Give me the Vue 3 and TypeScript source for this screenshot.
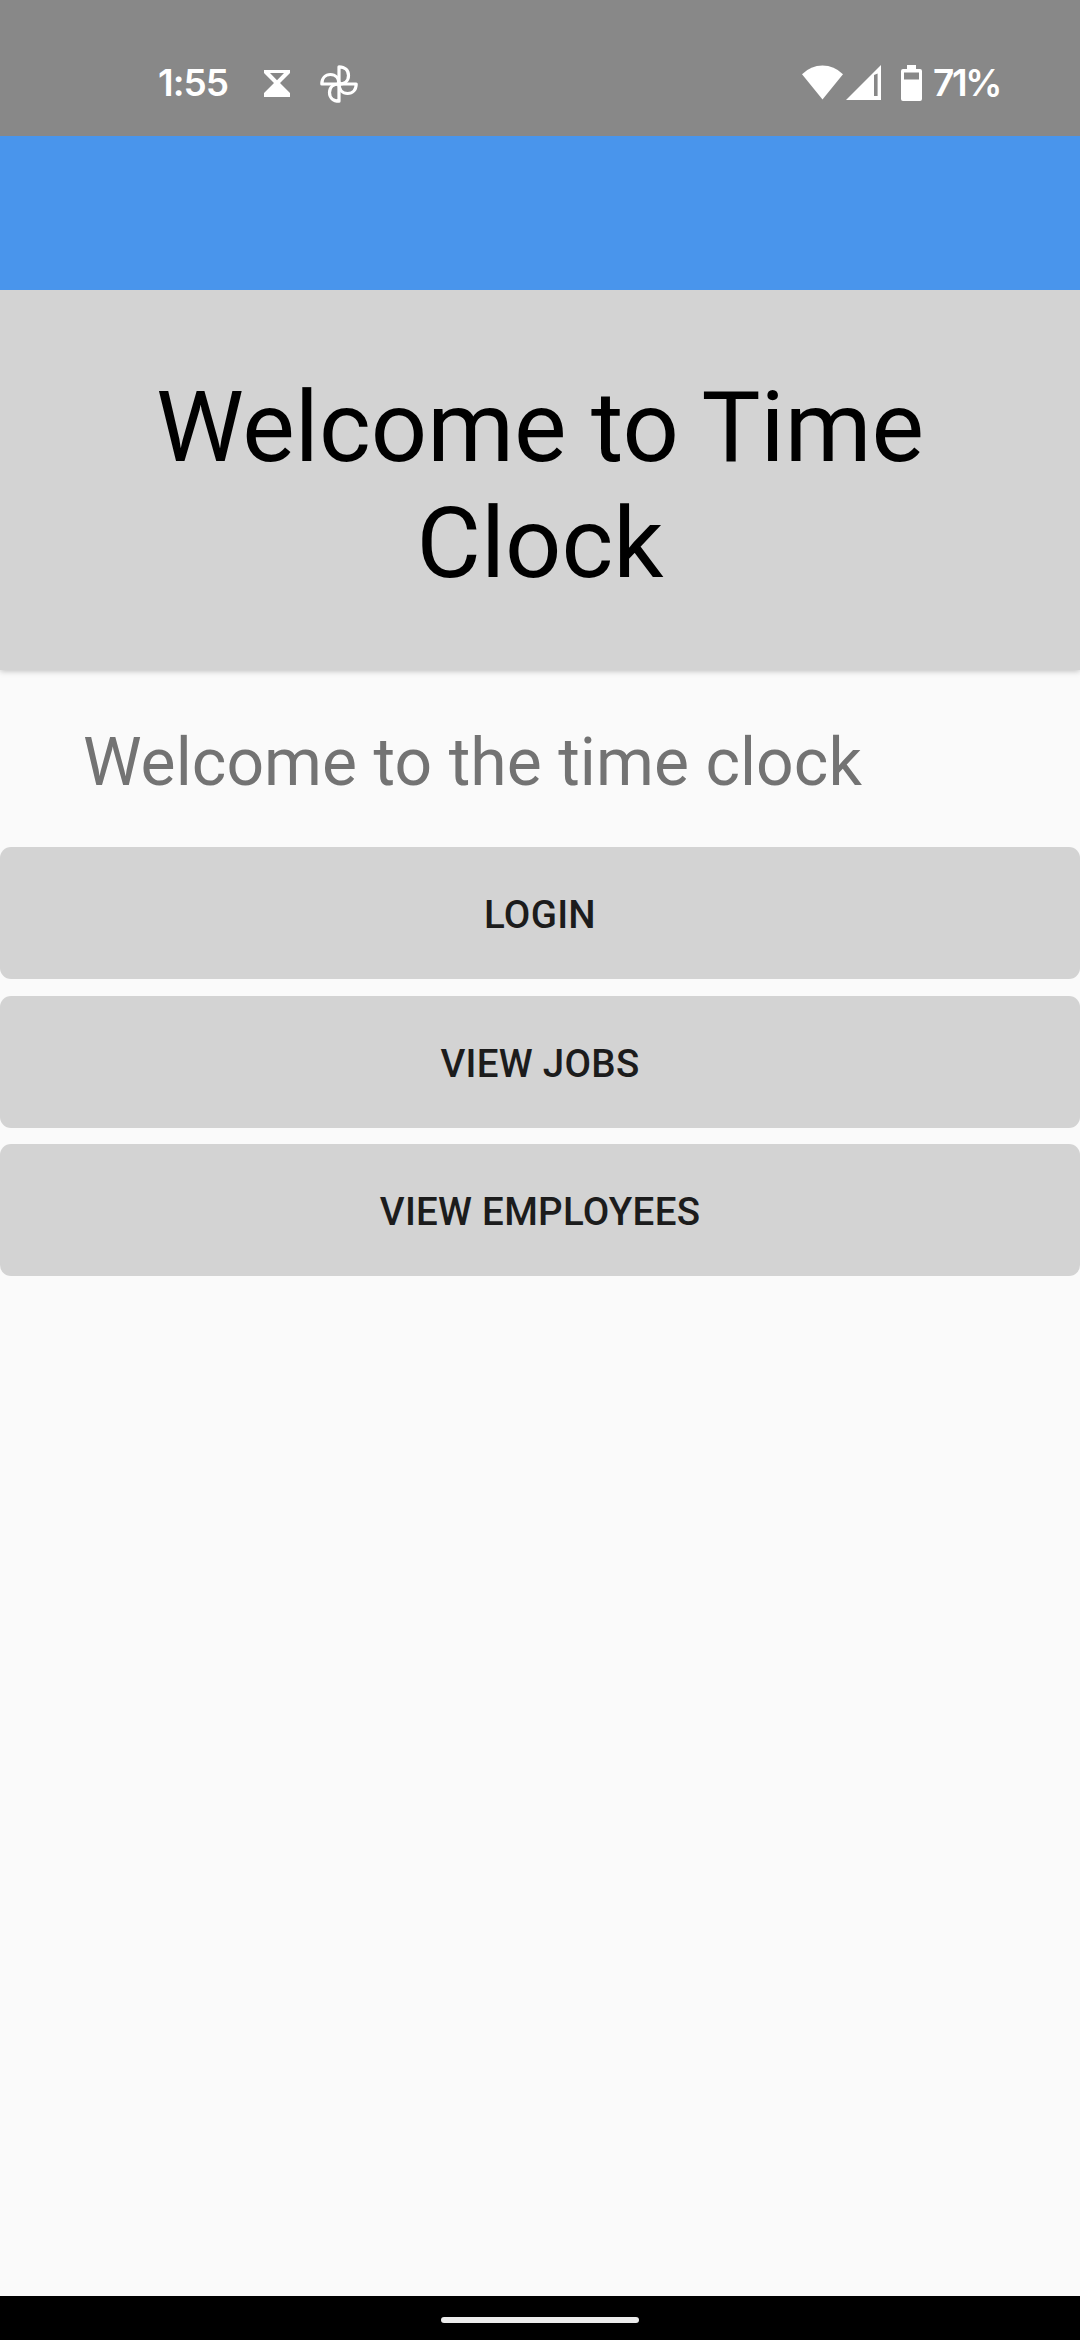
<script setup lang="ts">
import { ref } from 'vue'

const time = ref<string>('1:55')
const battery = ref<number>(71)
const actions: string[] = ['Login', 'View Jobs', 'View Employees']
const bladeAngles: number[] = [0, 90, 180, 270]
</script>

<template>
  <div class="screen">
    <header class="status">
      <span class="clock">{{ time }}</span>
      <svg class="hourglass" width="28" height="28" viewBox="0 0 28 28">
        <path fill="#fff" fill-rule="evenodd" d="M1 1H27V4L17 14L27 24V28H1V24L11 14L1 4ZM7 4L14 11.2L21 4Z" />
      </svg>
      <svg class="pinwheel" width="38" height="38" viewBox="0 0 38 38">
        <g fill="none" stroke="#fff" stroke-width="3.2" stroke-linejoin="round">
          <path
            v-for="angle in bladeAngles"
            :key="angle"
            d="M19 19V1.8C25 1.8 28.5 5.5 28.5 10.4S25 19 19 19"
            :transform="`rotate(${angle} 19 19)`"
          />
        </g>
      </svg>
      <span class="spacer"></span>
      <svg class="wifi" width="41" height="35" viewBox="0 0 41 35">
        <path fill="#fff" d="M0 9.2Q8.8 0.5 20.5 0.5T41 9.2L20.5 34.5Z" />
      </svg>
      <svg class="signal" width="35" height="35" viewBox="0 0 35 35">
        <path fill="#fff" fill-rule="evenodd" d="M0 35L35 0V35ZM28 10V31H31.6V8.5Z" />
      </svg>
      <svg class="cell" width="21" height="36" viewBox="0 0 21 36">
        <path fill="#fff" fill-rule="evenodd" d="M6 0H15V4H19Q21 4 21 6V34Q21 36 19 36H2Q0 36 0 34V6Q0 4 2 4H6ZM3 7.5V14.5H18V7.5Z" />
      </svg>
      <span class="percent">{{ battery }}%</span>
    </header>
    <div class="toolbar"></div>
    <h1 class="title">Welcome to Time Clock</h1>
    <main class="content">
      <p class="intro">Welcome to the time clock</p>
      <div class="actions">
        <button v-for="label in actions" :key="label" class="action" type="button">{{ label }}</button>
      </div>
    </main>
    <footer class="navbar"><span class="handle"></span></footer>
  </div>
</template>

<style>
body {
  margin: 0;
}
</style>

<style scoped>
.screen {
  display: flex;
  flex-direction: column;
  width: 1080px;
  height: 2340px;
  overflow: hidden;
  background: #fafafa;
  font-family: Roboto, sans-serif;
}

.status {
  box-sizing: border-box;
  display: flex;
  align-items: flex-start;
  flex: none;
  height: 136px;
  padding: 65px 78px 0 158px;
  background: #888;
  color: #fff;
  font-family: Inter, sans-serif;
  font-size: 37px;
  font-weight: 600;
}

.status svg {
  flex: none;
  display: block;
}

.clock,
.percent {
  flex: none;
  line-height: 36px;
  white-space: nowrap;
}

.clock {
  width: 105px;
  letter-spacing: -1px;
}

.hourglass {
  margin-top: 4px;
}

.pinwheel {
  margin-left: 29px;
}

.spacer {
  flex: 1;
}

.signal {
  margin-left: 3px;
}

.cell {
  margin-left: 20px;
}

.percent {
  width: 69px;
  margin-left: 11px;
  letter-spacing: -2.3px;
}

.toolbar {
  flex: none;
  height: 154px;
  background: #4995ec;
}

.title {
  box-sizing: border-box;
  flex: none;
  height: 380px;
  margin: 0;
  padding: 79px 100px 69px;
  background: #d3d3d3;
  box-shadow: 0 1px 6px rgba(0, 0, 0, 0.25);
  clip-path: inset(0 0 -12px 0);
  color: #000;
  font-size: 99px;
  font-weight: 400;
  line-height: 116px;
  text-align: center;
}

.content {
  flex: 1;
}

.intro {
  margin: 0;
  padding: 54px 83px 46px;
  color: #737373;
  font-size: 66px;
  line-height: 77px;
  letter-spacing: 0.06px;
}

.actions {
  display: flex;
  flex-direction: column;
}

.action {
  height: 132px;
  margin: 0 0 16px;
  padding: 2px 0 0;
  border: 0;
  border-radius: 11px;
  background: #d3d3d3;
  color: #1c1c1c;
  font-family: inherit;
  font-size: 38.5px;
  font-weight: 500;
  letter-spacing: 0.28px;
  text-transform: uppercase;
}

.action:first-child {
  margin-bottom: 17px;
}

.navbar {
  display: flex;
  flex: none;
  align-items: center;
  justify-content: center;
  height: 44px;
  background: #000;
}

.handle {
  width: 198px;
  height: 6px;
  margin-top: 4px;
  border-radius: 3px;
  background: #ebebeb;
}
</style>
